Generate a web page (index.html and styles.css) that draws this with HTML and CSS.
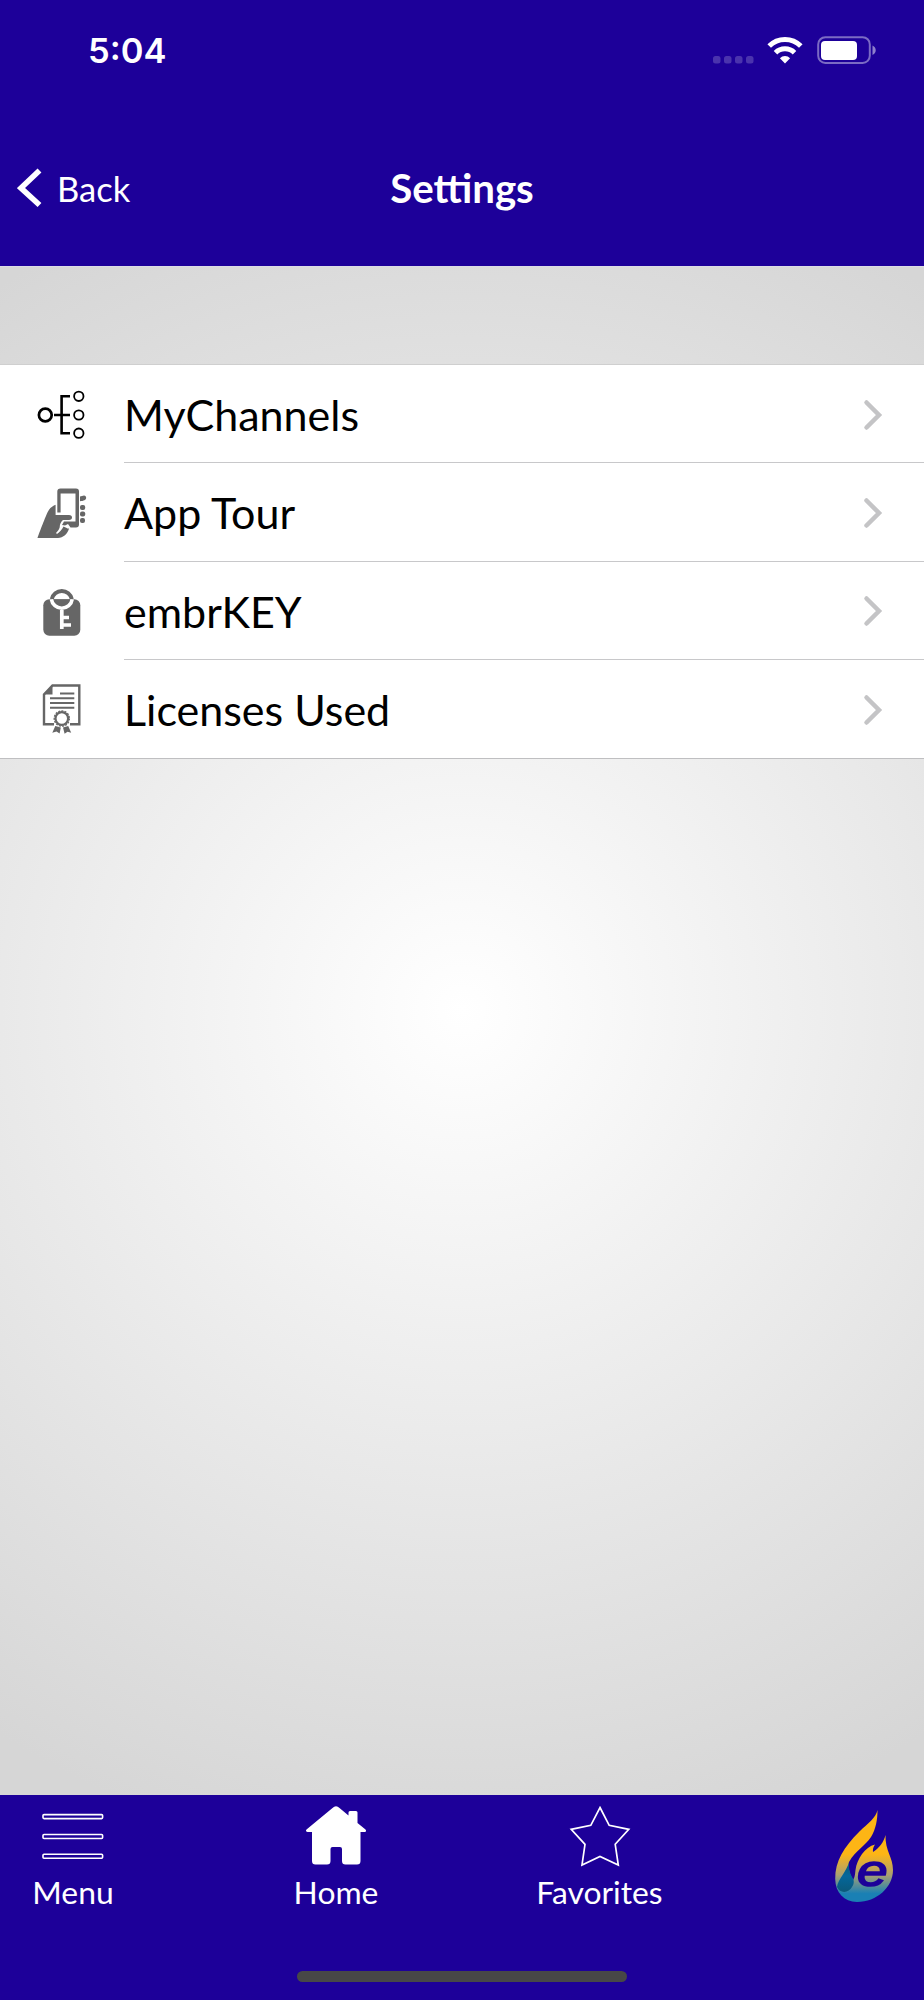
FILE: index.html
```html
<!DOCTYPE html>
<html lang="en">
<head>
    <meta charset="UTF-8">
    <meta name="viewport" content="width=device-width, initial-scale=1.0">
    <title>Settings</title>
    <link rel="stylesheet" href="styles.css">
</head>
<body>
    <header>
        <div class="status-bar">
            <span class="time">5:04</span>
            <svg class="status-icons" width="166" height="30" viewBox="0 0 166 30">
                <g fill="#fff" opacity="0.2">
                    <rect x="1" y="20" width="7.5" height="7.5" rx="2.5"/>
                    <rect x="12" y="20" width="7.5" height="7.5" rx="2.5"/>
                    <rect x="23" y="20" width="7.5" height="7.5" rx="2.5"/>
                    <rect x="34" y="20" width="7.5" height="7.5" rx="2.5"/>
                </g>
                <g fill="none" stroke="#fff" stroke-width="5">
                    <path d="M57.2 10 A22.2 22.2 0 0 1 88.8 10"/>
                    <path d="M63.5 16.7 A13.5 13.5 0 0 1 82.5 16.7"/>
                </g>
                <path d="M73 27.4 L67.9 22.2 A7.3 7.3 0 0 1 78.1 22.2 Z" fill="#fff"/>
                <rect x="106.2" y="1.2" width="51.6" height="25.8" rx="7.2" fill="none" stroke="#fff" stroke-width="2" opacity="0.42"/>
                <rect x="109" y="5" width="36" height="19" rx="4" fill="#fff"/>
                <path d="M160.5 9.5 C164.8 11.5 164.8 17 160.5 19 Z" fill="#fff" opacity="0.5"/>
            </svg>
        </div>
        <div class="nav-bar">
            <a class="back">
                <svg width="26" height="40" viewBox="0 0 26 40"><path d="M22.5 2.5 L4 20 L22.5 37" fill="none" stroke="#fff" stroke-width="5.6"/></svg>
                <span>Back</span>
            </a>
            <h1>Settings</h1>
        </div>
    </header>

    <main>
        <ul class="list">
            <li>
                <svg class="icon" width="50" height="50" viewBox="0 0 50 50" fill="none" stroke="#000">
                    <circle cx="8.3" cy="25" r="6.4" stroke-width="2.7"/>
                    <circle cx="41.8" cy="6.3" r="4.7" stroke-width="1.8"/>
                    <circle cx="41.8" cy="25" r="4.7" stroke-width="1.8"/>
                    <circle cx="41.8" cy="43.2" r="4.7" stroke-width="1.8"/>
                    <path d="M33 6.3 H24.6 V43.2 H33 M17 25 H33" stroke-width="2.6"/>
                </svg>
                <div class="row"><span>MyChannels</span>
                    <svg class="chevron" width="20" height="32" viewBox="0 0 20 32"><path d="M3.5 3.5 L16 16 L3.5 28.5"/></svg>
                </div>
            </li>
            <li>
                <svg class="icon" width="50" height="50" viewBox="0 0 50 50" fill="#666">
                    <path d="M0.5 50 C1.5 47 9 27 11 23.5 C13 19.5 16 18 18.6 16.8 V27 H32 C36 27 36 32 32 32 H26 C24 33.5 22.5 37 22.8 39 C22 42 20.5 43.5 19 45 L20 46 C22.5 44 25 41.5 26.5 38.5 C29 39.5 30.5 41 32 40.5 C31 45.5 26 50 21 50 Z"/>
                    <path d="M23.5 0.5 H39 Q42 0.5 42 3.5 V36.5 Q42 39.5 39 39.5 H33.5 L31 36 L28 37.5 L25 37 L27 33.5 H38.5 V5.5 H23.6 V24.5 H20.3 V3.5 Q20.3 0.5 23.5 0.5 Z"/>
                    <path d="M43 8.5 L47 7.5 C50 8 49.5 11 48 12 C46 13 44.5 13 43 13.2 Z"/>
                    <rect x="43" y="17" width="5.2" height="5" rx="2"/>
                    <rect x="43" y="23.5" width="5.2" height="5" rx="2"/>
                    <rect x="43" y="30" width="5" height="5" rx="2"/>
                </svg>
                <div class="row"><span>App Tour</span>
                    <svg class="chevron" width="20" height="32" viewBox="0 0 20 32"><path d="M3.5 3.5 L16 16 L3.5 28.5"/></svg>
                </div>
            </li>
            <li>
                <svg class="icon" width="50" height="50" viewBox="0 0 50 50">
                    <rect x="6.3" y="13.2" width="37" height="36.5" rx="6" fill="#666"/>
                    <path d="M14.8 13.2 A10.2 10.2 0 0 1 34.8 13.2" fill="#fff" stroke="#666" stroke-width="4"/>
                    <path d="M14.4 13.2 A10.5 10.5 0 0 0 35.2 13.2" fill="#666" stroke="#fff" stroke-width="3.6"/>
                    <path d="M24.8 24 V43 M25 31.5 H32 M25 39 H34" fill="none" stroke="#fff" stroke-width="3.7"/>
                </svg>
                <div class="row"><span>embrKEY</span>
                    <svg class="chevron" width="20" height="32" viewBox="0 0 20 32"><path d="M3.5 3.5 L16 16 L3.5 28.5"/></svg>
                </div>
            </li>
            <li>
                <svg class="icon" width="50" height="50" viewBox="0 0 50 50" fill="none" stroke="#666">
                    <path d="M17 40.2 H7 V10.5 L15.5 1.5 H42.3 V40.2 H33" stroke-width="2.4"/>
                    <path d="M7 10.5 L15.5 1.5 V10.5 Z" fill="#666" stroke="none"/>
                    <path d="M23 9.5 H37.3 M13 14.3 H37.3 M13 19 H37.3 M13 23.8 H37.3" stroke-width="1.9"/>
                    <circle cx="24.8" cy="34.5" r="6.3" stroke-width="2.2"/>
                    <circle cx="24.8" cy="34.5" r="7.6" stroke-width="1.3" stroke-dasharray="2 1.2"/>
                    <path d="M18.3 42 L23.8 43.5 L22.6 49.5 L19.5 47.5 L15.3 48.7 Z M26 43.5 L31.2 42 L34.2 48.8 L30.5 47.8 L27.6 49.8 Z" fill="#666" stroke="none"/>
                </svg>
                <div class="row"><span>Licenses Used</span>
                    <svg class="chevron" width="20" height="32" viewBox="0 0 20 32"><path d="M3.5 3.5 L16 16 L3.5 28.5"/></svg>
                </div>
            </li>
        </ul>
    </main>

    <footer>
        <nav class="tabs">
            <a class="tab menu">
                <svg width="62" height="62" viewBox="0 0 62 62" fill="none" stroke="#fff" stroke-width="1.6">
                    <rect x="1" y="9.6" width="59.6" height="4" rx="1"/>
                    <rect x="1" y="29.5" width="59.6" height="4" rx="1"/>
                    <rect x="1" y="49.2" width="59.6" height="4" rx="1"/>
                </svg>
                <span>Menu</span>
            </a>
            <a class="tab">
                <svg width="62" height="62" viewBox="0 0 62 62" fill="#fff">
                    <path d="M27.5 3 Q31 -0.5 34.5 3 L43.5 10.5 V7.5 Q43.5 6 45 6 H51 Q52.5 6 52.5 7.5 V18 L60.5 24.5 Q62 27 59.5 27 H55.5 V56 Q55.5 59.5 52 59.5 H40.5 Q37 59.5 37 56 V44 Q37 42 35 42 H27.5 Q25.5 42 25.5 44 V56 Q25.5 59.5 22 59.5 H10.5 Q7 59.5 7 56 V27 H2.5 Q0 26.5 1.5 24.5 Z"/>
                </svg>
                <span>Home</span>
            </a>
            <a class="tab">
                <svg width="62" height="62" viewBox="0 0 62 62" fill="none" stroke="#fff" stroke-width="1.7">
                    <path d="M31 2.5 L40.2 20.3 L59.8 24.3 L46.2 39.3 L49.3 60 L31 51.5 L13 60 L16 39.3 L2.2 24.3 L21.8 20.3 Z"/>
                </svg>
                <span>Favorites</span>
            </a>
            <a class="tab logo">
                <svg width="60" height="94" viewBox="0 0 60 94">
                    <defs>
                        <linearGradient id="flame" x1="0" y1="0" x2="0" y2="94" gradientUnits="userSpaceOnUse">
                            <stop offset="0.48" stop-color="#fdb515"/>
                            <stop offset="0.7" stop-color="#aaa072"/>
                            <stop offset="0.9" stop-color="#1a80b4"/>
                        </linearGradient>
                        <linearGradient id="drop" x1="0" y1="50" x2="0" y2="84" gradientUnits="userSpaceOnUse">
                            <stop offset="0.1" stop-color="#075b78"/>
                            <stop offset="0.5" stop-color="#04679b"/>
                            <stop offset="1" stop-color="#0b5878"/>
                        </linearGradient>
                    </defs>
                    <path d="M43.5 1 C42 9 34 14 25 23 C10 38 1 52 1.2 70 C1.5 84 10 92.5 23 93 C43 93 59 78 59 61 C59 48 51 42 51.5 26 C50 33 45 39 39 43 C38.5 40 39.5 38 41 35.5 C31 38 23 50 21.5 61 C21 66 20.5 69 19 71 C15.5 65 14 60 15 53 C22 41 31 37 37 28 C42 20 43.5 10 43.5 1 Z" fill="url(#flame)"/>
                    <path d="M15 53 C13 62 4 70 3 78 C6 85 15 84 18 78 C20 75 20 73 19.5 70.5 C16 65 14.5 60 15 53 Z" fill="url(#drop)"/>
                    <text class="logo-letter" transform="translate(23 77.4) scale(1.25 1)">e</text>
                </svg>
            </a>
        </nav>
        <div class="home-indicator"></div>
    </footer>
</body>
</html>
```
FILE: styles.css
```css
* {
    box-sizing: border-box;
}
body {
    margin: 0;
    height: 2000px;
    display: flex;
    flex-direction: column;
    font-family: Lato, sans-serif;
    background: radial-gradient(circle 860px at 462px 1010px, #fff, #d6d6d6);
}
header {
    height: 266px;
    background-color: #1d0099;
    color: #fff;
}
.status-bar {
    height: 112px;
    padding: 36px 46px 0 88px;
    display: flex;
    justify-content: space-between;
}
.time {
    font-family: Inter, sans-serif;
    font-size: 34.5px;
    font-weight: 600;
    line-height: 30px;
}
.nav-bar {
    height: 152px;
    padding: 0 16px;
    display: grid;
    grid-template-columns: 1fr auto 1fr;
    align-items: center;
}
.back {
    display: flex;
    align-items: center;
    gap: 14px;
    padding-left: 1px;
    font-size: 34.5px;
}
.nav-bar h1 {
    margin: 0 0 1px;
    font-size: 40.2px;
    font-weight: 700;
}
main {
    flex: 1;
    padding-top: 97px;
    border-top: 1px solid #dcdce6;
}
.list {
    margin: 0;
    padding: 0;
    list-style: none;
    background-color: #fff;
    border-top: 1px solid #cfcfcf;
    border-bottom: 1px solid #bfbfc1;
}
.list li {
    height: 98.25px;
    padding: 1px 0 0 37px;
    display: flex;
    align-items: center;
}
.icon {
    flex: none;
    margin-right: 37px;
}
.row {
    flex: 1;
    height: 100%;
    padding: 1px 41px 0 0;
    display: flex;
    align-items: center;
    justify-content: space-between;
    border-bottom: 1px solid #c8c8ca;
    font-size: 43px;
}
li:last-child .row {
    border-bottom: none;
}
.chevron {
    fill: none;
    stroke: #c4c4c6;
    stroke-width: 4.5;
    stroke-linecap: round;
}
footer {
    height: 205px;
    background-color: #1d0099;
    color: #fff;
    display: flex;
    flex-direction: column;
    align-items: center;
}
.tabs {
    width: 100%;
    height: 175px;
    padding-top: 10px;
    display: grid;
    grid-template-columns: 205px 262px 265px 192px;
}
.tab {
    display: flex;
    flex-direction: column;
    align-items: center;
    gap: 6px;
    font-size: 31.8px;
}
.menu {
    padding-right: 59px;
}
.logo {
    padding: 4px 0 0 72px;
}
.logo-letter {
    font-family: "Liberation Sans", sans-serif;
    font-size: 44px;
    font-style: italic;
    fill: #1d0099;
    stroke: #1d0099;
    stroke-width: 1.6;
}
.home-indicator {
    width: 330px;
    height: 11px;
    margin-top: 1px;
    border-radius: 6px;
    background-color: #474747;
}
```
